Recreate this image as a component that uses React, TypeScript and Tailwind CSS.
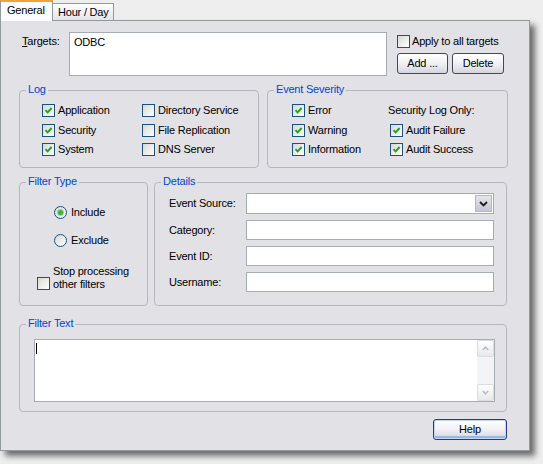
import React from "react";

function Check({ on }: { on?: boolean }) {
  return (
    <span className="w-[13px] h-[13px] shrink-0 border border-[#1c5180] bg-linear-to-br from-[#d8d8d2] to-white flex items-center justify-center">
      {on && (
        <svg width="9" height="9" viewBox="0 0 9 9">
          <path d="M1.5 4.2 L3.6 6.4 L7.6 2" stroke="#21a121" strokeWidth="1.9" fill="none" />
        </svg>
      )}
    </span>
  );
}

function Radio({ on }: { on?: boolean }) {
  return (
    <span className="w-[13px] h-[13px] shrink-0 rounded-full border border-[#1c5180] bg-linear-to-br from-[#d8d8d2] to-white flex items-center justify-center">
      {on && <span className="w-[5px] h-[5px] rounded-full bg-[#3cb43c] shadow-[0_0_0_1px_#8fd88f]" />}
    </span>
  );
}

function CheckRow({ label, on, className = "" }: { label: string; on?: boolean; className?: string }) {
  return (
    <div className={`flex items-center gap-[3px] h-[19.5px] ${className}`}>
      <Check on={on} />
      <span>{label}</span>
    </div>
  );
}

function Group({ title, className, children }: { title: string; className: string; children?: React.ReactNode }) {
  return (
    <div className={`relative border border-[#b6b6bf] rounded-[4px] ${className}`}>
      <span className="absolute -top-[8px] left-[6px] px-[2px] bg-[#e2e1e6] text-[#0046d5] leading-[13px]">{title}</span>
      {children}
    </div>
  );
}

function Button({ label, w, main }: { label: string; w: string; main?: boolean }) {
  return (
    <button
      className={`h-[21px] ${w} rounded-[3px] border bg-linear-to-b from-white via-[#f1f1f4] to-[#d4d4dc] text-black leading-[13px] ${
        main ? "border-[#1f3f8a] shadow-[inset_0_0_0_1px_#c4d5f3,inset_0_-2px_0_1px_#9db6e8]" : "border-[#404a58]"
      }`}
    >
      {label}
    </button>
  );
}

function Field({ label, dropdown }: { label: string; dropdown?: boolean }) {
  return (
    <div className="flex items-center">
      <span className="w-[77px]">{label}</span>
      <div className={`w-[248px] ${dropdown ? "h-[21px]" : "h-[20px]"} border border-[#a5acb5] bg-white flex justify-end p-px`}>
        {dropdown && (
          <div className="w-[17px] h-full bg-linear-to-b from-[#e6e6ec] to-[#c3c5d2] border border-[#b4b8c6] flex items-center justify-center">
            <svg width="9" height="6" viewBox="0 0 9 6">
              <path d="M1 1 L4.5 4.5 L8 1" stroke="#1b1b1b" strokeWidth="1.8" fill="none" />
            </svg>
          </div>
        )}
      </div>
    </div>
  );
}

function ScrollBtn({ up }: { up?: boolean }) {
  return (
    <div className="w-[17px] h-[17px] rounded-[2px] border border-[#dcdde2] bg-linear-to-b from-white to-[#e8e8ec] flex items-center justify-center">
      <svg width="7" height="5" viewBox="0 0 7 5">
        <path d={up ? "M0.8 4 L3.5 1.2 L6.2 4" : "M0.8 1 L3.5 3.8 L6.2 1"} stroke="#b8bcc8" strokeWidth="1.5" fill="none" />
      </svg>
    </div>
  );
}

export default function App() {
  return (
    <div className="w-[543px] h-[464px] bg-[#eeeeee] font-['Liberation_Sans',Arial,sans-serif] text-[11px] tracking-[-0.2px] text-black leading-[13px]">
      <div className="flex items-start h-[20px]">
        <div className="relative z-10 h-[21px] w-[53px] bg-[#fcfcfe] border-l border-r border-[#919b9c] border-t-2 border-t-[#f0a23c] pl-[6px] pt-[2px]">
          General
        </div>
        <div className="mt-[3px] h-[17px] w-[61px] border-t border-r border-[#919b9c] bg-linear-to-b from-white to-[#e4e4ea] pl-[5px] pt-[2px]">
          Hour / Day
        </div>
      </div>

      <div className="w-[530px] h-[431px] border border-[#919b9c] bg-[#e2e1e6] shadow-[5px_5px_6px_rgba(0,0,0,0.55)] pl-[18px] pt-[11px] flex flex-col">
        <div className="flex h-[44px]">
          <div className="w-[50px] pl-[3px] pt-[3px]">
            <span className="underline">T</span>argets:
          </div>
          <div className="w-[318px] h-[44px] border border-[#a5acb5] bg-white pl-[4px] pt-[3px]">ODBC</div>
          <div className="ml-[10px] flex flex-col">
            <div className="flex items-center gap-[2px] mt-[3px] h-[13px]">
              <Check />
              <span>Apply to all targets</span>
            </div>
            <div className="flex gap-[4px] mt-[5px]">
              <Button label="Add ..." w="w-[51px]" />
              <Button label="Delete" w="w-[52px]" />
            </div>
          </div>
        </div>

        <div className="flex gap-[8px] mt-[14px]">
          <Group title="Log" className="w-[240px] h-[78px] pl-[22px] pt-[10px]">
            <div className="grid grid-cols-[100px_1fr]">
              <CheckRow label="Application" on />
              <CheckRow label="Directory Service" />
              <CheckRow label="Security" on />
              <CheckRow label="File Replication" />
              <CheckRow label="System" on />
              <CheckRow label="DNS Server" />
            </div>
          </Group>
          <Group title="Event Severity" className="w-[241px] h-[78px] pl-[24px] pt-[10px]">
            <div className="grid grid-cols-[96px_1fr]">
              <CheckRow label="Error" on />
              <div className="flex items-center h-[19.5px]">Security Log Only:</div>
              <CheckRow label="Warning" on />
              <CheckRow label="Audit Failure" on className="pl-[2px]" />
              <CheckRow label="Information" on />
              <CheckRow label="Audit Success" on className="pl-[2px]" />
            </div>
          </Group>
        </div>

        <div className="flex gap-[6px] mt-[14px]">
          <Group title="Filter Type" className="w-[129px] h-[124px] pt-[15px]">
            <div className="pl-[34px] flex flex-col">
              <div className="flex items-center gap-[4px] h-[28px]">
                <Radio on />
                <span>Include</span>
              </div>
              <div className="flex items-center gap-[4px] h-[28px]">
                <Radio />
                <span>Exclude</span>
              </div>
            </div>
            <div className="flex items-end gap-[3px] pl-[17px] mt-[11px]">
              <span className="mb-[1px]">
                <Check />
              </span>
              <span>
                Stop processing
                <br />
                other filters
              </span>
            </div>
          </Group>
          <Group title="Details" className="w-[353px] h-[124px] pl-[14px] pt-[10px]">
            <div className="flex flex-col gap-[6px]">
              <Field label="Event Source:" dropdown />
              <Field label="Category:" />
              <Field label="Event ID:" />
              <Field label="Username:" />
            </div>
          </Group>
        </div>

        <Group title="Filter Text" className="mt-[18px] w-[488px] h-[88px] pl-[14px] pt-[14px]">
          <div className="w-[461px] h-[63px] border border-[#a5acb5] bg-white flex">
            <div className="flex-1 pl-[1px] pt-[3px]">
              <div className="w-px h-[11px] bg-black" />
            </div>
            <div className="w-[17px] h-full bg-[#f4f4f6] flex flex-col justify-between">
              <ScrollBtn up />
              <ScrollBtn />
            </div>
          </div>
        </Group>

        <div className="w-[488px] flex justify-end mt-[7px]">
          <Button label="Help" w="w-[74px]" main />
        </div>
      </div>
    </div>
  );
}
